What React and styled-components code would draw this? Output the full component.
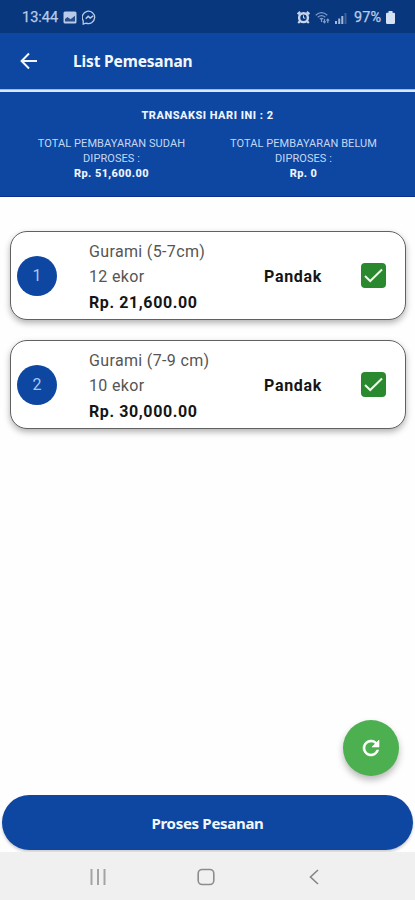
import React from "react";
import styled, { createGlobalStyle } from "styled-components";

const GlobalStyle = createGlobalStyle`
  * { box-sizing: border-box; }
  body { margin: 0; background: #fefefe; }
`;

const Screen = styled.div`
  position: relative;
  display: flex;
  flex-direction: column;
  width: 415px;
  height: 900px;
  overflow: hidden;
  background: #fefefe;
  font-family: Roboto, sans-serif;
`;

const StatusBar = styled.div`
  display: flex;
  align-items: center;
  justify-content: space-between;
  height: 33px;
  padding: 2px 20px 0 22px;
  background: #09377d;
  color: #b9cbe8;
  font: 400 14.5px/20px Roboto, sans-serif;
`;

const StatusGroup = styled.div`
  display: flex;
  align-items: center;
  gap: ${(p) => p.$gap}px;
  svg { display: block; }
`;

const StatusText = styled.span`
  margin-left: ${(p) => p.$left || 0}px;
  -webkit-text-stroke: 0.25px currentColor;
`;

const Header = styled.header`
  display: flex;
  align-items: center;
  gap: 35px;
  height: 56px;
  padding-left: 20px;
  background: #0d47a1;
  svg { display: block; }
`;

const Title = styled.h1`
  margin: 0;
  color: #f3f7fd;
  font: 700 15.5px/22px "Noto Sans", sans-serif;
  letter-spacing: -0.15px;
`;

const Rule = styled.div`
  height: 3px;
  background: #dbe8fb;
  border-top: 1px solid #9db9e3;
`;

const Summary = styled.section`
  height: 105px;
  padding-top: 16px;
  background: #0d47a1;
  border-bottom: 1px solid #0a2f8c;
  color: #eef4ff;
  text-align: center;
`;

const SummaryHeading = styled.div`
  font-size: 11px;
  line-height: 16px;
  font-weight: 800;
  letter-spacing: 0.5px;
`;

const SummaryColumns = styled.div`
  display: grid;
  grid-template-columns: 192px 192px;
  justify-content: center;
  margin-top: 12px;
`;

const SummaryLabel = styled.div`
  color: #c5d7f3;
  font-size: 11px;
  line-height: 15px;
  letter-spacing: 0.07px;
`;

const SummaryAmount = styled.div`
  font-size: 11px;
  line-height: 16px;
  font-weight: 800;
  letter-spacing: 0.4px;
`;

const Orders = styled.main`
  display: flex;
  flex-direction: column;
  gap: 20px;
  flex: 1;
  padding: 34px 9px 0 10px;
`;

const Card = styled.article`
  display: grid;
  grid-template-columns: 40px 175px 97px 26px;
  align-items: center;
  height: 89px;
  padding-left: 6px;
  border: 1px solid #616161;
  border-radius: 17px;
  background: #fff;
  box-shadow: 0 3px 6px rgba(0, 0, 0, 0.3);
`;

const Badge = styled.div`
  display: grid;
  place-items: center;
  width: 40px;
  height: 40px;
  border-radius: 50%;
  background: #0d47a1;
  color: #a9c6f2;
  font-size: 16px;
`;

const Details = styled.div`
  padding-left: 32px;
  padding-top: 3px;
  font-size: 16px;
  line-height: 25.3px;
  white-space: nowrap;
`;

const Line = styled.div`
  font-weight: ${(p) => (p.$strong ? 700 : 400)};
  color: ${(p) => (p.$strong ? "#151515" : "#555")};
  letter-spacing: ${(p) => (p.$strong ? 0.6 : 0.35)}px;
`;

const Place = styled.div`
  padding: 2px 0 0 32px;
  color: #151515;
  font-size: 16px;
  font-weight: 700;
  letter-spacing: 0.7px;
`;

const Check = styled.div`
  display: grid;
  place-items: center;
  width: 25px;
  height: 25px;
  margin-left: 32px;
  border-radius: 4px;
  background: #2a882e;
`;

const Refresh = styled.button`
  position: absolute;
  right: 16px;
  bottom: 124px;
  display: grid;
  place-items: center;
  width: 56px;
  height: 56px;
  padding: 0;
  border: 0;
  border-radius: 50%;
  background: #4caf50;
  box-shadow: 0 4px 7px rgba(0, 0, 0, 0.28);
`;

const Submit = styled.button`
  height: 55px;
  margin: 0 2px 2px;
  border: 0;
  border-radius: 28px;
  background: #0d47a1;
  box-shadow: 0 2px 3px rgba(0, 0, 0, 0.2);
  color: #f3f7fd;
  font: 700 15px/22px "Noto Sans", sans-serif;
  letter-spacing: -0.3px;
`;

const NavBar = styled.nav`
  display: flex;
  align-items: center;
  justify-content: space-between;
  height: 48px;
  padding: 2px 95px 0 89px;
  background: #f0f0f0;
  svg { display: block; }
  svg:nth-child(2) { margin-right: 4px; }
`;

const orders = [
  { name: "Gurami (5-7cm)", count: "12 ekor", price: "Rp. 21,600.00" },
  { name: "Gurami (7-9 cm)", count: "10 ekor", price: "Rp. 30,000.00" },
];

const totals = [
  { label: "SUDAH", amount: "Rp. 51,600.00" },
  { label: "BELUM", amount: "Rp. 0" },
];

function PictureIcon() {
  return (
    <svg width="14" height="13" viewBox="0 0 14 13">
      <rect x="0.5" y="0.5" width="13" height="12" rx="1.5" fill="#b9cbe8" />
      <path d="M2 10.5V8l2.5-2 3 2.2L12 4.7v5.8z" fill="#294f8d" />
    </svg>
  );
}

function MessengerIcon() {
  return (
    <svg width="15" height="15" viewBox="0 0 15 15" fill="none" stroke="#b9cbe8" strokeWidth="1.3">
      <path d="M1.2 14v-3.3A6.2 6.2 0 1 1 4 13.1L1.2 14z" />
      <path d="m3.8 8.8 2.4-2.6 2 1.8 2.9-2.2" strokeWidth="1.5" />
    </svg>
  );
}

function AlarmIcon() {
  return (
    <svg width="13" height="13" viewBox="0 0 13 13" fill="none" stroke="#c9d7ec">
      <circle cx="6.5" cy="6.7" r="4.4" strokeWidth="2.4" />
      <path d="M.7 3.2 3.2.9M12.3 3.2 9.8.9M1.2 12l2-2M11.8 12l-2-2" strokeWidth="2.2" />
      <path d="M6.5 4.3v2.8h1.8" strokeWidth="1" />
    </svg>
  );
}

function WifiIcon() {
  return (
    <svg width="15" height="13" viewBox="0 0 15 13" fill="none" stroke="#7e9bc7" strokeWidth="1.2">
      <path d="M.7 4.2Q6.5-1 12.3 4.2M2.7 6.2q3.8-3 7.6 0M4.7 8q1.8-1.3 3.6 0M6.5 8v3" />
      <path d="M9.5 8v3.7M8 10.2l1.5 1.6 1.2-1.4M12.8 12V8.3M11.5 9.7l1.3-1.5 1.4 1.5" strokeWidth="1.2" />
    </svg>
  );
}

function SignalIcon() {
  return (
    <svg width="12" height="12" viewBox="0 0 12 12">
      <path d="M0 9h2v3H0zM3.2 6.5h2V12h-2zM6.3 4h2v8h-2z" fill="#a5b9d9" />
      <path d="M9.5 1h2v11h-2z" fill="#3e619b" />
    </svg>
  );
}

function BatteryIcon() {
  return (
    <svg width="9" height="13" viewBox="0 0 9 13" fill="#d6e1f3">
      <path d="M2.5 0h4v1.7H8Q9 1.7 9 3v8.7Q9 13 7.7 13H1.3Q0 13 0 11.7V3q0-1.3 1-1.3h1.5z" />
    </svg>
  );
}

export default function App() {
  return (
    <>
      <GlobalStyle />
      <Screen>
        <StatusBar>
          <StatusGroup $gap={5}>
            <StatusText>13:44</StatusText>
            <PictureIcon />
            <MessengerIcon />
          </StatusGroup>
          <StatusGroup $gap={5}>
            <AlarmIcon />
            <WifiIcon />
            <SignalIcon />
            <StatusText $left={2}>97%</StatusText>
            <BatteryIcon />
          </StatusGroup>
        </StatusBar>
        <Header>
          <svg width="18" height="18" viewBox="0 0 18 18" fill="none" stroke="#f3f7fd" strokeWidth="2">
            <path d="M17 9H2M9 1.5 1.6 9 9 16.5" />
          </svg>
          <Title>List Pemesanan</Title>
        </Header>
        <Rule />
        <Summary>
          <SummaryHeading>TRANSAKSI HARI INI : 2</SummaryHeading>
          <SummaryColumns>
            {totals.map((t) => (
              <div key={t.label}>
                <SummaryLabel>
                  TOTAL PEMBAYARAN {t.label}
                  <br />
                  DIPROSES :
                </SummaryLabel>
                <SummaryAmount>{t.amount}</SummaryAmount>
              </div>
            ))}
          </SummaryColumns>
        </Summary>
        <Orders>
          {orders.map((o, i) => (
            <Card key={o.name}>
              <Badge>{i + 1}</Badge>
              <Details>
                <Line>{o.name}</Line>
                <Line>{o.count}</Line>
                <Line $strong>{o.price}</Line>
              </Details>
              <Place>Pandak</Place>
              <Check>
                <svg width="19" height="15" viewBox="0 0 19 15" fill="none" stroke="#eefbea" strokeWidth="2">
                  <path d="m1 8 5.2 5L18 1.5" />
                </svg>
              </Check>
            </Card>
          ))}
        </Orders>
        <Submit>Proses Pesanan</Submit>
        <NavBar>
          <svg width="18" height="16" viewBox="0 0 18 16" stroke="#a3a3a3" strokeWidth="2">
            <path d="M2.5 0v16M9 0v16M15.5 0v16" />
          </svg>
          <svg width="18" height="18" viewBox="0 0 18 18" fill="none" stroke="#8c8c8c" strokeWidth="1.6">
            <rect x="1.2" y="1.5" width="15.6" height="15" rx="4" />
          </svg>
          <svg width="12" height="16" viewBox="0 0 12 16" fill="none" stroke="#858585" strokeWidth="1.6">
            <path d="M10 1 2.5 8l7.5 7" />
          </svg>
        </NavBar>
        <Refresh aria-label="Refresh">
          <svg width="24" height="24" viewBox="0 0 24 24" fill="#fff" stroke="#fff" strokeWidth="0.6">
            <path d="M17.65 6.35A7.96 7.96 0 0 0 12 4a8 8 0 1 0 7.73 10h-2.08A6 6 0 1 1 12 6c1.66 0 3.14.69 4.22 1.78L13 11h7V4z" />
          </svg>
        </Refresh>
      </Screen>
    </>
  );
}
